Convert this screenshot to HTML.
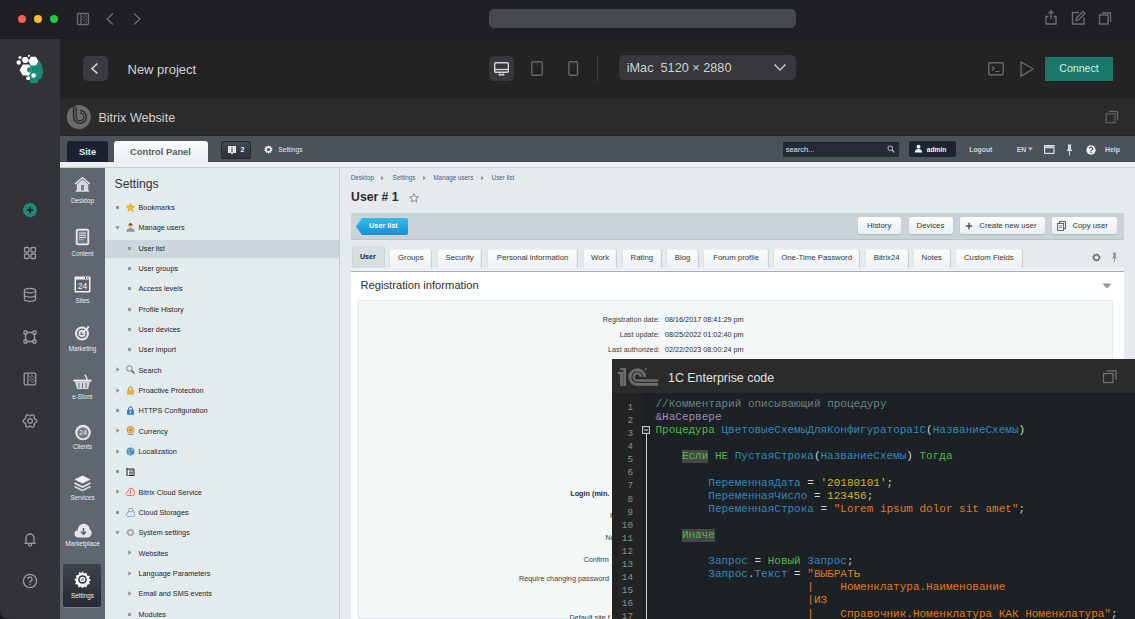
<!DOCTYPE html><html><head><meta charset="utf-8"><style>
html,body{margin:0;padding:0;width:1135px;height:619px;overflow:hidden;background:#1f2023;position:relative}
body{font-family:"Liberation Sans",sans-serif}
</style></head><body>
<div style="position:absolute;left:0px;top:0px;width:1135px;height:39px;background:#1f2023"></div>
<div style="position:absolute;left:17.75px;top:14.5px;width:8.5px;height:8.5px;border-radius:50%;background:#fe5f57"></div>
<div style="position:absolute;left:33.75px;top:14.5px;width:8.5px;height:8.5px;border-radius:50%;background:#febc2e"></div>
<div style="position:absolute;left:49.75px;top:14.5px;width:8.5px;height:8.5px;border-radius:50%;background:#28c840"></div>
<svg style="position:absolute;left:76px;top:12px;" width="14" height="14" viewBox="0 0 14 14"><rect x="1.5" y="1.5" width="11" height="11" rx="1" fill="none" stroke="#6c6c6f" stroke-width="1.3"/><path d="M5 1.8v10.4" stroke="#6c6c6f" stroke-width="1.2"/><path d="M6.5 4l5 5M6.5 7l4 4M8 2.5l4 4" stroke="#6c6c6f" stroke-width=".9"/></svg>
<svg style="position:absolute;left:104px;top:12px;" width="12" height="14" viewBox="0 0 12 14"><path d="M9 1.5L3 7l6 5.5" fill="none" stroke="#6c6c6f" stroke-width="1.3"/></svg>
<svg style="position:absolute;left:131px;top:12px;" width="12" height="14" viewBox="0 0 12 14"><path d="M3 1.5L9 7l-6 5.5" fill="none" stroke="#6c6c6f" stroke-width="1.3"/></svg>
<div style="position:absolute;left:489px;top:9px;width:307px;height:19px;background:#474a4d;border-radius:5px"></div>
<svg style="position:absolute;left:1044px;top:9.3px;" width="14" height="16" viewBox="0 0 14 16"><path d="M4.5 7.5H2v7.5h10V7.5H9.5M7 10V2M4.5 4.5L7 2l2.5 2.5" fill="none" stroke="#6c6c6f" stroke-width="1.4"/></svg>
<svg style="position:absolute;left:1071px;top:10.3px;" width="15" height="15" viewBox="0 0 15 15"><path d="M8 2.5H1.5v11.5h11.5V7.5" fill="none" stroke="#6c6c6f" stroke-width="1.4"/><path d="M5 10.5l0.8-2.8L12 1.5l2 2-6.2 6.2z" fill="none" stroke="#6c6c6f" stroke-width="1.3"/></svg>
<svg style="position:absolute;left:1098px;top:11.3px;" width="14" height="14" viewBox="0 0 14 14"><rect x="1.5" y="4" width="8.5" height="9" fill="none" stroke="#6c6c6f" stroke-width="1.4"/><path d="M4 2h8.5v9" fill="none" stroke="#6c6c6f" stroke-width="1.3"/></svg>
<div style="position:absolute;left:0px;top:39px;width:60px;height:580px;background:#323337"></div>
<svg style="position:absolute;left:10px;top:48px;" width="40" height="40" viewBox="0 0 40 40"><path d="M26.5 11.8C29.5 12.5 31.6 15 32.2 18.3c.3 1.6.2 2.8.9 4.4l.4 1.6-1.2.9.5 1.3-.9.6.6 1.4-.9 1.1c-.4.8-.8 1.3-1.9 1.5l-1.4.2-.3 3.8H20.4L19.6 31 18 25 18.5 17z" fill="#1a8a77"/>
<polygon points="28.4,13.2 25.9,17.6 20.9,17.6 18.4,13.2 20.9,8.8 25.9,8.8" fill="#fff"/>
<polygon points="18.8,12 17,15.1 13.5,15.1 11.7,12 13.5,8.9 17,8.9" fill="#fff"/>
<polygon points="22,22 18.9,27.6 12.7,27.6 9.6,22 12.7,16.4 18.9,16.4" fill="#fff"/>
<rect x="17.2" y="19.3" width="4.6" height="5.2" rx="2" fill="#1a8a77"/>
<circle cx="8.7" cy="14.5" r="2.2" fill="#fff"/><circle cx="10" cy="9.4" r="1.5" fill="#fff"/><circle cx="18.9" cy="7.8" r="1.1" fill="#fff"/>
<circle cx="23.6" cy="27.5" r="2.3" fill="#fff"/><circle cx="18.1" cy="30.3" r="2" fill="#fff"/></svg>
<div style="position:absolute;left:23px;top:203px;width:14px;height:14px;border-radius:50%;background:#1d8a78"></div>
<svg style="position:absolute;left:23px;top:203px;" width="14" height="14" viewBox="0 0 14 14"><path d="M7 3.8v6.4M3.8 7h6.4" stroke="#1a1a1a" stroke-width="1.4"/></svg>
<svg style="position:absolute;left:23px;top:246px;" width="14" height="14" viewBox="0 0 14 14"><g fill="none" stroke="#9c9c9e" stroke-width="1.3"><rect x="1.5" y="1.5" width="4.5" height="4.5" rx="1"/><rect x="8" y="1.5" width="4.5" height="4.5" rx="1"/><rect x="1.5" y="8" width="4.5" height="4.5" rx="1"/><rect x="8" y="8" width="4.5" height="4.5" rx="1"/></g></svg>
<svg style="position:absolute;left:23px;top:287px;" width="14" height="16" viewBox="0 0 14 16"><g fill="none" stroke="#9c9c9e" stroke-width="1.3"><ellipse cx="7" cy="3.6" rx="5.6" ry="2.3"/><path d="M1.4 3.6v8.4c0 1.3 2.5 2.3 5.6 2.3s5.6-1 5.6-2.3V3.6M1.4 7.8c0 1.3 2.5 2.3 5.6 2.3s5.6-1 5.6-2.3"/></g></svg>
<svg style="position:absolute;left:23px;top:330px;" width="14" height="14" viewBox="0 0 14 14"><g fill="none" stroke="#9c9c9e" stroke-width="1.3"><rect x="1" y="1" width="3" height="3" rx=".6"/><rect x="10" y="1" width="3" height="3" rx=".6"/><rect x="1" y="10" width="3" height="3" rx=".6"/><rect x="10" y="10" width="3" height="3" rx=".6"/><path d="M4 2.5h6M4 11.5h6M2.5 4v6M11.5 4v6"/></g></svg>
<svg style="position:absolute;left:23px;top:372px;" width="14" height="14" viewBox="0 0 14 14"><rect x="1.2" y="1.2" width="11.6" height="11.6" rx="1.2" fill="none" stroke="#9c9c9e" stroke-width="1.3"/><path d="M5 1.5v11" stroke="#9c9c9e" stroke-width="1.2"/><path d="M6.5 4l5 5M6.5 7l4 4M8 2.5l4 4" stroke="#9c9c9e" stroke-width=".9"/></svg>
<svg style="position:absolute;left:22px;top:413px;" width="16" height="16" viewBox="0 0 16 16"><g fill="none" stroke="#9c9c9e" stroke-width="1.3"><path d="M14.85 8.00 L14.71 8.59 L14.33 9.12 L13.80 9.55 L13.24 9.91 L12.77 10.22 L12.46 10.57 L12.31 11.02 L12.27 11.58 L12.24 12.24 L12.13 12.92 L11.86 13.52 L11.43 13.93 L10.85 14.10 L10.20 14.04 L9.55 13.80 L8.97 13.49 L8.46 13.24 L8.00 13.15 L7.54 13.24 L7.03 13.49 L6.45 13.80 L5.80 14.04 L5.15 14.10 L4.58 13.93 L4.14 13.52 L3.87 12.92 L3.76 12.24 L3.73 11.58 L3.69 11.02 L3.54 10.58 L3.23 10.22 L2.76 9.91 L2.20 9.55 L1.67 9.12 L1.29 8.59 L1.15 8.00 L1.29 7.41 L1.67 6.88 L2.20 6.45 L2.76 6.09 L3.23 5.78 L3.54 5.42 L3.69 4.98 L3.73 4.42 L3.76 3.76 L3.87 3.08 L4.14 2.48 L4.57 2.07 L5.15 1.90 L5.80 1.96 L6.45 2.20 L7.03 2.51 L7.54 2.76 L8.00 2.85 L8.46 2.76 L8.97 2.51 L9.55 2.20 L10.20 1.96 L10.85 1.90 L11.42 2.07 L11.86 2.48 L12.13 3.08 L12.24 3.76 L12.27 4.42 L12.31 4.98 L12.46 5.43 L12.77 5.78 L13.24 6.09 L13.80 6.45 L14.33 6.88 L14.71 7.41 L14.85 8.00Z"/><circle cx="8" cy="8" r="2.3"/></g></svg>
<svg style="position:absolute;left:23px;top:531px;" width="14" height="16" viewBox="0 0 14 16"><g fill="none" stroke="#9c9c9e" stroke-width="1.3"><path d="M3 12V7a4 4 0 0 1 8 0v5M1.5 12.3h11M5.5 13v.5a1.5 1.5 0 0 0 3 0V13"/></g></svg>
<svg style="position:absolute;left:22px;top:573px;" width="16" height="16" viewBox="0 0 16 16"><g fill="none" stroke="#9c9c9e" stroke-width="1.3"><circle cx="8" cy="8" r="6.6"/><path d="M5.9 6.3a2.1 2.1 0 1 1 3 1.9c-.6.3-.9.8-.9 1.4v.6"/></g><circle cx="8" cy="11.8" r=".8" fill="#9c9c9e"/></svg>
<div style="position:absolute;left:0;top:610px;width:9px;height:9px;background:radial-gradient(circle at 9px 0, rgba(0,0,0,0) 8.3px, #1c1d20 9.5px)"></div>
<div style="position:absolute;left:60px;top:39px;width:1075px;height:60px;background:#232323"></div>
<div style="position:absolute;left:83px;top:56px;width:25px;height:25px;background:#3a3b3f;border-radius:5px"></div>
<svg style="position:absolute;left:83px;top:56px;" width="25" height="25" viewBox="0 0 25 25"><path d="M14.5 7.5L9 12.5l5.5 5" fill="none" stroke="#d8d8d8" stroke-width="1.6"/></svg>
<div style="position:absolute;left:127.5px;top:62.60px;font:400 13px/13px 'Liberation Sans', sans-serif;color:#d4d4d4;white-space:pre;">New project</div>
<div style="position:absolute;left:489px;top:56px;width:25px;height:25px;background:#37383c;border-radius:5px"></div>
<svg style="position:absolute;left:489px;top:56px;" width="25" height="25" viewBox="0 0 25 25"><g fill="none" stroke="#d6d6d6" stroke-width="1.4"><rect x="5.7" y="6.7" width="13.6" height="9.6" rx="1"/><path d="M5.7 13.5h13.6"/></g><path d="M11 16.5h3v2h-3zM9.5 18.8h6" stroke="#d6d6d6" stroke-width="1.2"/></svg>
<svg style="position:absolute;left:530px;top:60px;" width="14" height="17" viewBox="0 0 14 17"><rect x="1.8" y="1.8" width="10.4" height="13.4" rx="1.2" fill="none" stroke="#686868" stroke-width="1.4"/><circle cx="7" cy="4" r=".6" fill="#686868"/></svg>
<svg style="position:absolute;left:567px;top:60px;" width="13" height="17" viewBox="0 0 13 17"><rect x="1.9" y="1.8" width="8.6" height="13.4" rx="1.2" fill="none" stroke="#686868" stroke-width="1.4"/><path d="M6.2 3.5v1.2" stroke="#686868" stroke-width=".8"/></svg>
<div style="position:absolute;left:597px;top:56px;width:1px;height:26px;background:#3a3a3a"></div>
<div style="position:absolute;left:619px;top:55px;width:177px;height:25px;background:#37383c;border-radius:5px"></div>
<div style="position:absolute;left:626.7px;top:61.95px;font:400 12.7px/12.7px 'Liberation Sans', sans-serif;color:#d2d2d2;white-space:pre;">iMac  5120 × 2880</div>
<svg style="position:absolute;left:772px;top:62px;" width="16" height="11" viewBox="0 0 16 11"><path d="M2.5 2.5l5.5 5.5 5.5-5.5" fill="none" stroke="#c4c4c4" stroke-width="1.5"/></svg>
<svg style="position:absolute;left:987px;top:61px;" width="18" height="16" viewBox="0 0 18 16"><rect x="1.8" y="1.8" width="14.4" height="12" rx="1" fill="none" stroke="#6a6a6a" stroke-width="1.4"/><path d="M4.8 5.5l2.5 2-2.5 2M8.5 10.5h4" fill="none" stroke="#6a6a6a" stroke-width="1.2"/></svg>
<svg style="position:absolute;left:1019px;top:60px;" width="16" height="18" viewBox="0 0 16 18"><path d="M2 1.8v14.4l12.2-7.2z" fill="none" stroke="#6a6a6a" stroke-width="1.4" stroke-linejoin="round"/></svg>
<div style="position:absolute;left:1045px;top:57px;width:68px;height:24px;background:#19786a"></div>
<div style="position:absolute;left:1059.3px;top:63.13px;font:400 10.6px/10.6px 'Liberation Sans', sans-serif;color:#d8ebe7;white-space:pre;">Connect</div>
<div style="position:absolute;left:60px;top:99px;width:1075px;height:36px;background:#2b2b2b"></div>
<svg style="position:absolute;left:62px;top:101px;" width="34" height="32" viewBox="0 0 34 32"><circle cx="16.8" cy="16.1" r="12" fill="#6c6c6c"/><path d="M11.6 4V16A6.4 6.4 0 1 0 18 9.6" fill="none" stroke="#2b2b2b" stroke-width="1.5"/><path d="M14.2 5.5V16A3.8 3.8 0 1 0 18 12.2" fill="none" stroke="#2b2b2b" stroke-width="1.3"/></svg>
<div style="position:absolute;left:98.4px;top:111.53px;font:400 12.6px/12.6px 'Liberation Sans', sans-serif;color:#d2d2d2;white-space:pre;">Bitrix Website</div>
<svg style="position:absolute;left:1105px;top:110px;" width="14" height="14" viewBox="0 0 14 14"><rect x="1.2" y="3.8" width="9" height="9" fill="none" stroke="#666" stroke-width="1.1"/><path d="M3.8 1.4h8.8v8.8" fill="none" stroke="#666" stroke-width="1.1"/></svg>
<div style="position:absolute;left:60px;top:135px;width:1075px;height:1px;background:#232323"></div>
<div style="position:absolute;left:60px;top:136px;width:1075px;height:26px;background:#4c525a"></div>
<div style="position:absolute;left:60px;top:160.6px;width:1075px;height:1.6px;background:#3f444b"></div>
<div style="position:absolute;left:60px;top:162.2px;width:1075px;height:5px;background:#ebf0f1"></div>
<div style="position:absolute;left:60px;top:167px;width:1075px;height:1px;background:#c6ced2"></div>
<div style="position:absolute;left:67px;top:141px;width:40.5px;height:20.5px;background:#1b2130;border-radius:2px 2px 0 0"></div>
<div style="position:absolute;left:79px;top:147.63px;font:700 9.3px/9.3px 'Liberation Sans', sans-serif;color:#e6ecf2;white-space:pre;">Site</div>
<div style="position:absolute;left:114px;top:140.5px;width:94px;height:22px;background:linear-gradient(#fbfcfc,#e9eef0);border-radius:3px 3px 0 0"></div>
<div style="position:absolute;left:130px;top:146.54px;font:700 9.4px/9.4px 'Liberation Sans', sans-serif;color:#575d63;white-space:pre;">Control Panel</div>
<div style="position:absolute;left:221px;top:140.5px;width:29.5px;height:18.5px;background:linear-gradient(#434956,#2c313b);border-radius:3px;box-shadow:inset 0 0 0 1px #262a32"></div>
<svg style="position:absolute;left:227px;top:145px;" width="10" height="11" viewBox="0 0 10 11"><path d="M1 1h8v7H6l-1 2-1-2H1z" fill="#e8ecef"/><rect x="4.4" y="2.2" width="1.2" height="1.2" fill="#3a404a"/><rect x="4.4" y="4" width="1.2" height="3.2" fill="#3a404a"/></svg>
<div style="position:absolute;left:240.5px;top:146.37px;font:700 7px/7px 'Liberation Sans', sans-serif;color:#eef2f6;white-space:pre;">2</div>
<svg style="position:absolute;left:264px;top:145px;" width="9" height="9" viewBox="0 0 9 9"><path d="M4.5 .3l.9 1.2 1.5-.4.2 1.5 1.4.7-.7 1.2.7 1.2-1.4.7-.2 1.5-1.5-.4-.9 1.2-.9-1.2-1.5.4-.2-1.5L.3 5.7 1 4.5.3 3.3l1.4-.7.2-1.5 1.5.4z" fill="#e4e8ec"/><circle cx="4.5" cy="4.5" r="1.6" fill="#4a5058"/></svg>
<div style="position:absolute;left:278.2px;top:146.69px;font:400 6.75px/6.75px 'Liberation Sans', sans-serif;color:#e4e9ee;white-space:pre;">Settings</div>
<div style="position:absolute;left:783px;top:142px;width:116px;height:15px;background:#252a36;border-radius:1px;box-shadow:inset 0 1px 0 #1b1f28"></div>
<div style="position:absolute;left:785.7px;top:146.25px;font:400 7.5px/7.5px 'Liberation Sans', sans-serif;color:#dfe6ee;white-space:pre;">search...</div>
<svg style="position:absolute;left:887px;top:145px;" width="8" height="8" viewBox="0 0 8 8"><circle cx="3.3" cy="3.3" r="2.3" fill="none" stroke="#b9c0c8" stroke-width="1"/><path d="M5 5l2.2 2.3" stroke="#b9c0c8" stroke-width="1.2"/></svg>
<div style="position:absolute;left:909.3px;top:141.4px;width:46.5px;height:16px;background:#1d2330;border-radius:2px"></div>
<svg style="position:absolute;left:914px;top:144px;" width="9" height="9" viewBox="0 0 9 9"><circle cx="4.5" cy="2.7" r="2" fill="#eef1f4"/><path d="M.8 8.5c0-2.4 1.6-3.5 3.7-3.5s3.7 1.1 3.7 3.5z" fill="#eef1f4"/></svg>
<div style="position:absolute;left:926.7px;top:147.13px;font:700 6.7px/6.7px 'Liberation Sans', sans-serif;color:#eef3f8;white-space:pre;">admin</div>
<div style="position:absolute;left:969.3px;top:147.24px;font:700 6.8px/6.8px 'Liberation Sans', sans-serif;color:#cfd6dd;white-space:pre;">Logout</div>
<div style="position:absolute;left:1016.8px;top:147.24px;font:700 6.8px/6.8px 'Liberation Sans', sans-serif;color:#cfd6dd;white-space:pre;">EN</div>
<svg style="position:absolute;left:1028px;top:147px;" width="5" height="4" viewBox="0 0 5 4"><path d="M0 .5h5L2.5 3.5z" fill="#b9c1c8"/></svg>
<svg style="position:absolute;left:1044px;top:145px;" width="11" height="9" viewBox="0 0 11 9"><rect x=".6" y=".6" width="9.4" height="7.8" fill="none" stroke="#d6dce2" stroke-width="1.2"/><rect x="1.2" y="1.2" width="8.2" height="2" fill="#d6dce2"/></svg>
<svg style="position:absolute;left:1066px;top:144px;" width="7" height="12" viewBox="0 0 7 12"><path d="M1.5 .5h4L5 2v3l1.5 2h-6L2 5V2z" fill="#d6dce2"/><path d="M3.5 7v4.5" stroke="#d6dce2" stroke-width="1"/></svg>
<svg style="position:absolute;left:1086px;top:145px;" width="10" height="10" viewBox="0 0 10 10"><circle cx="5" cy="5" r="4.7" fill="#eef1f4"/><path d="M3.4 3.8a1.6 1.6 0 1 1 2.2 1.4c-.4.2-.6.5-.6.9v.4" fill="none" stroke="#4a5058" stroke-width="1.1"/><rect x="4.4" y="7.1" width="1.2" height="1.1" fill="#4a5058"/></svg>
<div style="position:absolute;left:1104.9px;top:146.47px;font:700 7px/7px 'Liberation Sans', sans-serif;color:#cfd6dd;white-space:pre;">Help</div>
<div style="position:absolute;left:60px;top:168px;width:45px;height:451px;background:#60666f"></div>
<div style="position:absolute;left:63.2px;top:564.2px;width:37.5px;height:43.2px;background:linear-gradient(#3d434d,#262b33);border-radius:2px;box-shadow:0 1px 0 #7b818a"></div>
<div style="position:absolute;left:82.5px;top:198.07px;font:400 6.3px/6.3px 'Liberation Sans', sans-serif;color:#e8eef4;white-space:pre;transform:translateX(-50%)">Desktop</div>
<div style="position:absolute;left:82.5px;top:251.27px;font:400 6.3px/6.3px 'Liberation Sans', sans-serif;color:#e8eef4;white-space:pre;transform:translateX(-50%)">Content</div>
<div style="position:absolute;left:82.5px;top:297.57px;font:400 6.3px/6.3px 'Liberation Sans', sans-serif;color:#e8eef4;white-space:pre;transform:translateX(-50%)">Sites</div>
<div style="position:absolute;left:82.5px;top:346.27px;font:400 6.3px/6.3px 'Liberation Sans', sans-serif;color:#e8eef4;white-space:pre;transform:translateX(-50%)">Marketing</div>
<div style="position:absolute;left:82.5px;top:394.47px;font:400 6.3px/6.3px 'Liberation Sans', sans-serif;color:#e8eef4;white-space:pre;transform:translateX(-50%)">e-Store</div>
<div style="position:absolute;left:82.5px;top:444.17px;font:400 6.3px/6.3px 'Liberation Sans', sans-serif;color:#e8eef4;white-space:pre;transform:translateX(-50%)">Clients</div>
<div style="position:absolute;left:82.5px;top:495.07px;font:400 6.3px/6.3px 'Liberation Sans', sans-serif;color:#e8eef4;white-space:pre;transform:translateX(-50%)">Services</div>
<div style="position:absolute;left:82.5px;top:540.97px;font:400 6.3px/6.3px 'Liberation Sans', sans-serif;color:#e8eef4;white-space:pre;transform:translateX(-50%)">Marketplace</div>
<div style="position:absolute;left:82.5px;top:593.27px;font:400 6.3px/6.3px 'Liberation Sans', sans-serif;color:#e8eef4;white-space:pre;transform:translateX(-50%)">Settings</div>
<svg style="position:absolute;left:74px;top:176px;" width="17" height="16" viewBox="0 0 17 16"><defs><linearGradient id="ig" x1="0" y1="0" x2="0" y2="1"><stop offset="0" stop-color="#f4f5f6"/><stop offset="1" stop-color="#b9bdc2"/></linearGradient></defs><path d="M8.5 .8L.6 7.5l1 .9L8.5 2.6l6.9 5.8 1-.9z" fill="#eceeef"/><path d="M2.8 8.2L8.5 3.6l5.7 4.6v6.8H2.8z" fill="#d6d9dc"/><rect x="7" y="9" width="3" height="6" fill="#7c8188"/><rect x="1.8" y="14.5" width="13.4" height="1.2" fill="#eceeef"/></svg>
<svg style="position:absolute;left:75px;top:228px;" width="15" height="18" viewBox="0 0 15 18"><rect x=".8" y=".8" width="13.4" height="16.4" rx="2" fill="#e4e7e9"/><rect x="2.6" y="2.6" width="9.8" height="12.8" fill="#70767e"/><path d="M4 5h7M4 7.2h7M4 9.4h7" stroke="#e8ebed" stroke-width="1"/><path d="M4 11.6h4.5" stroke="#a8adb2" stroke-width="1.4"/></svg>
<svg style="position:absolute;left:74px;top:276px;" width="17" height="17" viewBox="0 0 17 17"><rect x=".5" y=".5" width="16" height="16" rx="1" fill="#eef0f1"/><rect x="2" y="3.5" width="13" height="11.5" fill="#5d636b"/><rect x="11" y="1" width="1" height="2" fill="#5d636b"/><rect x="13.5" y="1" width="1" height="2" fill="#5d636b"/><text x="8.5" y="13" font-family="Liberation Sans" font-size="8.5" fill="#f2f4f5" text-anchor="middle">24</text></svg>
<svg style="position:absolute;left:74px;top:325px;" width="16" height="16" viewBox="0 0 16 16"><circle cx="8" cy="8.5" r="7" fill="#e6e8ea"/><circle cx="8" cy="8.5" r="5" fill="#6a7078"/><circle cx="8" cy="8.5" r="3.4" fill="#e6e8ea"/><circle cx="8" cy="8.5" r="1.7" fill="#6a7078"/><path d="M8 8.5L14 2.5" stroke="#f4f5f6" stroke-width="1.3"/><path d="M12.5 1.5l2 2 1-2.2z" fill="#f4f5f6"/></svg>
<svg style="position:absolute;left:73px;top:374px;" width="19" height="16" viewBox="0 0 19 16"><path d="M12 .8l2.5 5" stroke="#eceeef" stroke-width="1.4"/><path d="M.5 5.6h18v2H.5z" fill="#eceeef"/><path d="M2 7.6h15l-2 7.5H4z" fill="#d6d9dc"/><path d="M6 9v5M9.5 9v5M13 9v5" stroke="#6a7078" stroke-width="1"/></svg>
<svg style="position:absolute;left:73.5px;top:424px;" width="18" height="17" viewBox="0 0 18 17"><circle cx="9" cy="8.5" r="7.8" fill="#e6e8ea"/><circle cx="9" cy="8.8" r="5.6" fill="#747a82"/><text x="9" y="11.4" font-family="Liberation Sans" font-size="7" fill="#eef0f2" text-anchor="middle">24</text></svg>
<svg style="position:absolute;left:73.5px;top:474.5px;" width="17" height="17" viewBox="0 0 17 17"><path d="M8.5 .5L16.5 4.5 8.5 8.5.5 4.5z" fill="#eff1f2"/><path d="M.5 8L8.5 12 16.5 8" fill="none" stroke="#e2e5e8" stroke-width="1.6"/><path d="M.5 11.5L8.5 15.5 16.5 11.5" fill="none" stroke="#d2d6da" stroke-width="1.6"/></svg>
<svg style="position:absolute;left:73.5px;top:523px;" width="18" height="15" viewBox="0 0 18 15"><path d="M4.5 14.5C2 14.5.5 12.8.5 10.7.5 8.8 2 7.3 3.8 7.1 4 3.5 6.5.7 9.8.7c3.3 0 5.8 2.6 6 5.7 1.2.6 1.8 2 1.8 3.6 0 2.5-1.8 4.5-4.3 4.5z" fill="#e4e7e9"/><path d="M9.5 5v6M7 8.8l2.5 2.6 2.5-2.6" fill="none" stroke="#5d636b" stroke-width="1.6"/></svg>
<svg style="position:absolute;left:73.5px;top:571px;" width="17" height="17" viewBox="0 0 17 17"><path d="M8.5 .3l1.4 2.3 2.6-.8.6 2.7 2.7.6-.8 2.6 2.3 1.4-2.3 1.4.8 2.6-2.7.6-.6 2.7-2.6-.8-1.4 2.3-1.4-2.3-2.6.8-.6-2.7-2.7-.6.8-2.6L.3 8.5 2.6 7.1l-.8-2.6 2.7-.6.6-2.7 2.6.8z" fill="#f5f6f7"/><circle cx="8.5" cy="8.5" r="4.3" fill="#2f343c"/><circle cx="8.5" cy="8.5" r="2.8" fill="#f5f6f7"/><circle cx="8.5" cy="8.5" r="1.4" fill="#8e949b"/></svg>
<div style="position:absolute;left:105px;top:168px;width:234px;height:451px;background:#e4ebed"></div>
<div style="position:absolute;left:339px;top:168px;width:1px;height:451px;background:#c4cfd4"></div>
<div style="position:absolute;left:114.5px;top:177.67px;font:400 12.2px/12.2px 'Liberation Sans', sans-serif;color:#2e3133;white-space:pre;">Settings</div>
<div style="position:absolute;left:105px;top:240.4px;width:234px;height:18.1px;background:#cdd6da"></div>
<div style="position:absolute;left:115.9px;top:205.9px;width:3.2px;height:3.2px;background:#8d979c"></div>
<svg style="position:absolute;left:125.5px;top:202.8px;" width="9" height="9" viewBox="0 0 9 9"><path d="M4.5 .3l1.3 2.8 3 .3-2.3 2 .7 3L4.5 6.8 1.8 8.4l.7-3-2.3-2 3-.3z" fill="#f5c518" stroke="#c9931a" stroke-width=".5"/></svg>
<div style="position:absolute;left:138.5px;top:204.04px;font:400 7.28px/7.28px 'Liberation Sans', sans-serif;color:#1f2326;white-space:pre;">Bookmarks</div>
<svg style="position:absolute;left:115.0px;top:225.82999999999998px;" width="5" height="4" viewBox="0 0 5 4"><path d="M.2 .3h4.6L2.5 3.7z" fill="#8a9499"/></svg>
<svg style="position:absolute;left:125.5px;top:223.13px;" width="9" height="9" viewBox="0 0 9 9"><circle cx="4.5" cy="2.6" r="2.1" fill="#e8b878"/><path d="M.3 8.8c0-2.6 1.8-3.8 4.2-3.8s4.2 1.2 4.2 3.8z" fill="#8d9399"/><path d="M2.4 2.2c.3-1.5 1.2-2 2.1-2s1.9.5 2.1 2z" fill="#6b4a2a"/></svg>
<div style="position:absolute;left:138.5px;top:224.37px;font:400 7.28px/7.28px 'Liberation Sans', sans-serif;color:#1f2326;white-space:pre;">Manage users</div>
<div style="position:absolute;left:127.9px;top:246.56px;width:3.2px;height:3.2px;background:#8d979c"></div>
<div style="position:absolute;left:138.5px;top:244.70px;font:400 7.28px/7.28px 'Liberation Sans', sans-serif;color:#1f2326;white-space:pre;">User list</div>
<div style="position:absolute;left:127.9px;top:266.89000000000004px;width:3.2px;height:3.2px;background:#8d979c"></div>
<div style="position:absolute;left:138.5px;top:265.03px;font:400 7.28px/7.28px 'Liberation Sans', sans-serif;color:#1f2326;white-space:pre;">User groups</div>
<div style="position:absolute;left:127.9px;top:287.22px;width:3.2px;height:3.2px;background:#8d979c"></div>
<div style="position:absolute;left:138.5px;top:285.36px;font:400 7.28px/7.28px 'Liberation Sans', sans-serif;color:#1f2326;white-space:pre;">Access levels</div>
<div style="position:absolute;left:127.9px;top:307.55px;width:3.2px;height:3.2px;background:#8d979c"></div>
<div style="position:absolute;left:138.5px;top:305.69px;font:400 7.28px/7.28px 'Liberation Sans', sans-serif;color:#1f2326;white-space:pre;">Profile History</div>
<div style="position:absolute;left:127.9px;top:327.88px;width:3.2px;height:3.2px;background:#8d979c"></div>
<div style="position:absolute;left:138.5px;top:326.02px;font:400 7.28px/7.28px 'Liberation Sans', sans-serif;color:#1f2326;white-space:pre;">User devices</div>
<div style="position:absolute;left:127.9px;top:348.21000000000004px;width:3.2px;height:3.2px;background:#8d979c"></div>
<div style="position:absolute;left:138.5px;top:346.35px;font:400 7.28px/7.28px 'Liberation Sans', sans-serif;color:#1f2326;white-space:pre;">User import</div>
<svg style="position:absolute;left:115.5px;top:367.44px;" width="4" height="5" viewBox="0 0 4 5"><path d="M.3 .3L3.7 2.5.3 4.7z" fill="#8a9499"/></svg>
<svg style="position:absolute;left:125.5px;top:365.44px;" width="9" height="9" viewBox="0 0 9 9"><circle cx="3.5" cy="3.5" r="2.8" fill="#dfeaf2" stroke="#6b7c88" stroke-width=".9"/><path d="M5.5 5.5l3 3" stroke="#50606b" stroke-width="1.4"/></svg>
<div style="position:absolute;left:138.5px;top:366.68px;font:400 7.28px/7.28px 'Liberation Sans', sans-serif;color:#1f2326;white-space:pre;">Search</div>
<svg style="position:absolute;left:115.5px;top:387.77px;" width="4" height="5" viewBox="0 0 4 5"><path d="M.3 .3L3.7 2.5.3 4.7z" fill="#8a9499"/></svg>
<svg style="position:absolute;left:125.5px;top:385.77px;" width="9" height="9" viewBox="0 0 9 9"><rect x="1" y="3.8" width="7" height="5" rx=".8" fill="#e8b33a"/><path d="M2.6 3.8V2.8a1.9 1.9 0 0 1 3.8 0v1" fill="none" stroke="#b0862a" stroke-width="1"/></svg>
<div style="position:absolute;left:138.5px;top:387.01px;font:400 7.28px/7.28px 'Liberation Sans', sans-serif;color:#1f2326;white-space:pre;">Proactive Protection</div>
<div style="position:absolute;left:115.9px;top:409.20000000000005px;width:3.2px;height:3.2px;background:#8d979c"></div>
<svg style="position:absolute;left:125.5px;top:406.1px;" width="9" height="9" viewBox="0 0 9 9"><rect x="1" y="3.8" width="7" height="5" rx=".8" fill="#2d7fd0"/><path d="M2.6 3.8V2.8a1.9 1.9 0 0 1 3.8 0v1" fill="none" stroke="#2d5f9a" stroke-width="1"/><rect x="3.8" y="5" width="1.4" height="2.4" fill="#d8e8f6"/></svg>
<div style="position:absolute;left:138.5px;top:407.34px;font:400 7.28px/7.28px 'Liberation Sans', sans-serif;color:#1f2326;white-space:pre;">HTTPS Configuration</div>
<svg style="position:absolute;left:115.5px;top:428.43px;" width="4" height="5" viewBox="0 0 4 5"><path d="M.3 .3L3.7 2.5.3 4.7z" fill="#8a9499"/></svg>
<svg style="position:absolute;left:125.5px;top:426.43px;" width="9" height="9" viewBox="0 0 9 9"><circle cx="4.5" cy="3.8" r="3.5" fill="#e6c46a" stroke="#a8843a" stroke-width=".7"/><circle cx="4.5" cy="3.8" r="1.6" fill="#c0923a"/><path d="M1.5 8.5h6" stroke="#8d9399" stroke-width="1"/></svg>
<div style="position:absolute;left:138.5px;top:427.67px;font:400 7.28px/7.28px 'Liberation Sans', sans-serif;color:#1f2326;white-space:pre;">Currency</div>
<svg style="position:absolute;left:115.5px;top:448.76px;" width="4" height="5" viewBox="0 0 4 5"><path d="M.3 .3L3.7 2.5.3 4.7z" fill="#8a9499"/></svg>
<svg style="position:absolute;left:125.5px;top:446.76px;" width="9" height="9" viewBox="0 0 9 9"><circle cx="4.5" cy="4.5" r="4" fill="#4c8ed8"/><path d="M2 2.5c1 .5 1.5 1.5 1 3s1 2 2 2.5M6 1.2c-.5 1 0 2 1.2 2.2" fill="none" stroke="#8cc870" stroke-width="1.2"/></svg>
<div style="position:absolute;left:138.5px;top:448.00px;font:400 7.28px/7.28px 'Liberation Sans', sans-serif;color:#1f2326;white-space:pre;">Localization</div>
<div style="position:absolute;left:115.9px;top:470.19px;width:3.2px;height:3.2px;background:#8d979c"></div>
<svg style="position:absolute;left:125.5px;top:467.09px;" width="9" height="9" viewBox="0 0 9 9"><path d="M1 .8v8.4M1 2h7v6.5H2.5" fill="none" stroke="#222" stroke-width="1"/><path d="M3 3.8h4M3 5.4h4M3 7h4" stroke="#222" stroke-width=".7"/></svg>
<svg style="position:absolute;left:115.5px;top:489.42px;" width="4" height="5" viewBox="0 0 4 5"><path d="M.3 .3L3.7 2.5.3 4.7z" fill="#8a9499"/></svg>
<svg style="position:absolute;left:125.5px;top:487.42px;" width="9" height="9" viewBox="0 0 9 9"><path d="M2.2 8.6C1 8.6.3 7.8.3 6.8s.7-1.7 1.6-1.8C2 3 3.3 1.2 5 1.2s2.9 1.3 3 3c.6.3.9 1 .9 1.8 0 1.4-1 2.6-2.4 2.6z" fill="#fbe4dc" stroke="#e0452a" stroke-width=".8"/><path d="M4.7 3.2v3.5" stroke="#e0452a" stroke-width="1"/></svg>
<div style="position:absolute;left:138.5px;top:488.66px;font:400 7.28px/7.28px 'Liberation Sans', sans-serif;color:#1f2326;white-space:pre;">Bitrix Cloud Service</div>
<div style="position:absolute;left:115.9px;top:510.85px;width:3.2px;height:3.2px;background:#8d979c"></div>
<svg style="position:absolute;left:125.5px;top:507.75px;" width="9" height="9" viewBox="0 0 9 9"><path d="M2.2 8.8C1 8.8.3 8 .3 7s.7-1.7 1.6-1.8C2 3.2 3.3 1.4 5 1.4s2.9 1.3 3 3c.6.3.9 1 .9 1.8 0 1.4-1 2.6-2.4 2.6z" fill="#dcecfb" stroke="#4a90d8" stroke-width=".8"/><rect x="3" y=".3" width="3.5" height="3" fill="#eef3f8" stroke="#6f8090" stroke-width=".6"/></svg>
<div style="position:absolute;left:138.5px;top:508.99px;font:400 7.28px/7.28px 'Liberation Sans', sans-serif;color:#1f2326;white-space:pre;">Cloud Storages</div>
<svg style="position:absolute;left:115.0px;top:530.78px;" width="5" height="4" viewBox="0 0 5 4"><path d="M.2 .3h4.6L2.5 3.7z" fill="#8a9499"/></svg>
<svg style="position:absolute;left:125.5px;top:528.0799999999999px;" width="9" height="9" viewBox="0 0 9 9"><path d="M4.5 .3l.9 1.2 1.5-.4.2 1.5 1.4.7-.7 1.2.7 1.2-1.4.7-.2 1.5-1.5-.4-.9 1.2-.9-1.2-1.5.4-.2-1.5L.3 5.7 1 4.5.3 3.3l1.4-.7.2-1.5 1.5.4z" fill="#a4abb1"/><circle cx="4.5" cy="4.5" r="1.7" fill="#e3eaec"/></svg>
<div style="position:absolute;left:138.5px;top:529.32px;font:400 7.28px/7.28px 'Liberation Sans', sans-serif;color:#1f2326;white-space:pre;">System settings</div>
<svg style="position:absolute;left:127.5px;top:550.41px;" width="4" height="5" viewBox="0 0 4 5"><path d="M.3 .3L3.7 2.5.3 4.7z" fill="#8a9499"/></svg>
<div style="position:absolute;left:138.5px;top:549.65px;font:400 7.28px/7.28px 'Liberation Sans', sans-serif;color:#1f2326;white-space:pre;">Websites</div>
<svg style="position:absolute;left:127.5px;top:570.74px;" width="4" height="5" viewBox="0 0 4 5"><path d="M.3 .3L3.7 2.5.3 4.7z" fill="#8a9499"/></svg>
<div style="position:absolute;left:138.5px;top:569.98px;font:400 7.28px/7.28px 'Liberation Sans', sans-serif;color:#1f2326;white-space:pre;">Language Parameters</div>
<svg style="position:absolute;left:127.5px;top:591.0699999999999px;" width="4" height="5" viewBox="0 0 4 5"><path d="M.3 .3L3.7 2.5.3 4.7z" fill="#8a9499"/></svg>
<div style="position:absolute;left:138.5px;top:590.31px;font:400 7.28px/7.28px 'Liberation Sans', sans-serif;color:#1f2326;white-space:pre;">Email and SMS events</div>
<div style="position:absolute;left:127.9px;top:612.5px;width:3.2px;height:3.2px;background:#8d979c"></div>
<div style="position:absolute;left:138.5px;top:610.64px;font:400 7.28px/7.28px 'Liberation Sans', sans-serif;color:#1f2326;white-space:pre;">Modules</div>
<div style="position:absolute;left:340px;top:168px;width:795px;height:451px;background:#e5ebed"></div>
<div style="position:absolute;left:350.8px;top:174.97px;font:400 6.3px/6.3px 'Liberation Sans', sans-serif;color:#4a5884;white-space:pre;">Desktop</div>
<div style="position:absolute;left:392.6px;top:174.97px;font:400 6.3px/6.3px 'Liberation Sans', sans-serif;color:#4a5884;white-space:pre;">Settings</div>
<div style="position:absolute;left:433.4px;top:174.97px;font:400 6.3px/6.3px 'Liberation Sans', sans-serif;color:#4a5884;white-space:pre;">Manage users</div>
<div style="position:absolute;left:491.6px;top:174.97px;font:400 6.3px/6.3px 'Liberation Sans', sans-serif;color:#4a5884;white-space:pre;">User list</div>
<svg style="position:absolute;left:381.4px;top:176px;" width="3" height="4" viewBox="0 0 3 4"><path d="M0 0L3 2 0 4z" fill="#8d979c"/></svg>
<svg style="position:absolute;left:422.8px;top:176px;" width="3" height="4" viewBox="0 0 3 4"><path d="M0 0L3 2 0 4z" fill="#8d979c"/></svg>
<svg style="position:absolute;left:480.9px;top:176px;" width="3" height="4" viewBox="0 0 3 4"><path d="M0 0L3 2 0 4z" fill="#8d979c"/></svg>
<div style="position:absolute;left:351.1px;top:190.77px;font:700 12.2px/12.2px 'Liberation Sans', sans-serif;color:#2a2c2e;white-space:pre;">User # 1</div>
<svg style="position:absolute;left:409px;top:192.5px;" width="10" height="10" viewBox="0 0 10 10"><path d="M5 .6l1.3 2.9 3.1.3-2.4 2.1.7 3.1L5 7.4 2.3 9l.7-3.1L.6 3.8l3.1-.3z" fill="none" stroke="#6f787d" stroke-width=".8"/></svg>
<div style="position:absolute;left:351px;top:213px;width:773px;height:26.5px;background:#cad3d7;border-radius:2px;box-shadow:inset 0 -1px 0 #b9c3c8"></div>
<svg style="position:absolute;left:356px;top:218px;" width="52" height="17" viewBox="0 0 52 17"><defs><linearGradient id="bl" x1="0" y1="0" x2="0" y2="1"><stop offset="0" stop-color="#33bde8"/><stop offset="1" stop-color="#1a8fd2"/></linearGradient></defs><path d="M6 0H50a2 2 0 0 1 2 2V15a2 2 0 0 1-2 2H6L0 8.5z" fill="url(#bl)"/></svg>
<div style="position:absolute;left:369.1px;top:222.45px;font:700 7.27px/7.27px 'Liberation Sans', sans-serif;color:#ffffff;white-space:pre;">User list</div>
<div style="position:absolute;left:858.3px;top:217.4px;width:42.5px;height:16.4px;background:linear-gradient(#fbfcfc,#e9eef0);border-radius:2px;box-shadow:0 0 0 .5px #c3ccd0,0 1px 1px rgba(0,0,0,.18)"></div>
<div style="position:absolute;left:867.1px;top:221.90px;font:400 7.8px/7.8px 'Liberation Sans', sans-serif;color:#33383c;white-space:pre;">History</div>
<div style="position:absolute;left:908.8px;top:217.4px;width:44.200000000000045px;height:16.4px;background:linear-gradient(#fbfcfc,#e9eef0);border-radius:2px;box-shadow:0 0 0 .5px #c3ccd0,0 1px 1px rgba(0,0,0,.18)"></div>
<div style="position:absolute;left:916.6px;top:221.90px;font:400 7.8px/7.8px 'Liberation Sans', sans-serif;color:#33383c;white-space:pre;">Devices</div>
<div style="position:absolute;left:960.3px;top:217.4px;width:84.29999999999995px;height:16.4px;background:linear-gradient(#fbfcfc,#e9eef0);border-radius:2px;box-shadow:0 0 0 .5px #c3ccd0,0 1px 1px rgba(0,0,0,.18)"></div>
<svg style="position:absolute;left:965px;top:221.5px;" width="8" height="8" viewBox="0 0 8 8"><path d="M4 .8v6.4M.8 4h6.4" stroke="#4a5055" stroke-width="1.4"/></svg>
<div style="position:absolute;left:979.3px;top:221.90px;font:400 7.8px/7.8px 'Liberation Sans', sans-serif;color:#33383c;white-space:pre;">Create new user</div>
<div style="position:absolute;left:1051.9px;top:217.4px;width:64.69999999999982px;height:16.4px;background:linear-gradient(#fbfcfc,#e9eef0);border-radius:2px;box-shadow:0 0 0 .5px #c3ccd0,0 1px 1px rgba(0,0,0,.18)"></div>
<svg style="position:absolute;left:1057px;top:220.5px;" width="9" height="10" viewBox="0 0 9 10"><rect x="2.5" y=".6" width="6" height="7" fill="none" stroke="#4a5055" stroke-width=".9"/><rect x=".6" y="2.4" width="6" height="7" fill="#f2f4f5" stroke="#4a5055" stroke-width=".9"/><path d="M2 5h3M2 6.6h3" stroke="#4a5055" stroke-width=".6"/></svg>
<div style="position:absolute;left:1072.4px;top:221.90px;font:400 7.8px/7.8px 'Liberation Sans', sans-serif;color:#33383c;white-space:pre;">Copy user</div>
<div style="position:absolute;left:351.5px;top:246.3px;width:33.69999999999999px;height:21.5px;background:linear-gradient(#d9e0e3,#d5dde0);border-radius:2px 2px 0 0;box-shadow:inset 1px 0 0 #cdd5d9,inset -1px 0 0 #cdd5d9"></div>
<div style="position:absolute;left:360px;top:254.49px;font:700 7.1px/7.1px 'Liberation Sans', sans-serif;color:#1f2224;white-space:pre;">User</div>
<div style="position:absolute;left:389.3px;top:248.8px;width:43.0px;height:19px;background:linear-gradient(#fbfcfc,#eef2f3);border-radius:2px 2px 0 0;box-shadow:inset 0 .6px 0 #dfe5e8,inset .8px 0 0 #d9e0e3,inset -1.2px 0 0 #c9d1d5"></div>
<div style="position:absolute;left:389.3px;width:43.0px;top:253.80px;text-align:center;font:400 7.8px/7.8px 'Liberation Sans', sans-serif;color:#34393d;white-space:pre">Groups</div>
<div style="position:absolute;left:436.9px;top:248.8px;width:45.5px;height:19px;background:linear-gradient(#fbfcfc,#eef2f3);border-radius:2px 2px 0 0;box-shadow:inset 0 .6px 0 #dfe5e8,inset .8px 0 0 #d9e0e3,inset -1.2px 0 0 #c9d1d5"></div>
<div style="position:absolute;left:436.9px;width:45.5px;top:253.80px;text-align:center;font:400 7.8px/7.8px 'Liberation Sans', sans-serif;color:#34393d;white-space:pre">Security</div>
<div style="position:absolute;left:487px;top:248.8px;width:91.20000000000005px;height:19px;background:linear-gradient(#fbfcfc,#eef2f3);border-radius:2px 2px 0 0;box-shadow:inset 0 .6px 0 #dfe5e8,inset .8px 0 0 #d9e0e3,inset -1.2px 0 0 #c9d1d5"></div>
<div style="position:absolute;left:487px;width:91.20000000000005px;top:253.80px;text-align:center;font:400 7.8px/7.8px 'Liberation Sans', sans-serif;color:#34393d;white-space:pre">Personal information</div>
<div style="position:absolute;left:582.8px;top:248.8px;width:34.60000000000002px;height:19px;background:linear-gradient(#fbfcfc,#eef2f3);border-radius:2px 2px 0 0;box-shadow:inset 0 .6px 0 #dfe5e8,inset .8px 0 0 #d9e0e3,inset -1.2px 0 0 #c9d1d5"></div>
<div style="position:absolute;left:582.8px;width:34.60000000000002px;top:253.80px;text-align:center;font:400 7.8px/7.8px 'Liberation Sans', sans-serif;color:#34393d;white-space:pre">Work</div>
<div style="position:absolute;left:621.9px;top:248.8px;width:39.89999999999998px;height:19px;background:linear-gradient(#fbfcfc,#eef2f3);border-radius:2px 2px 0 0;box-shadow:inset 0 .6px 0 #dfe5e8,inset .8px 0 0 #d9e0e3,inset -1.2px 0 0 #c9d1d5"></div>
<div style="position:absolute;left:621.9px;width:39.89999999999998px;top:253.80px;text-align:center;font:400 7.8px/7.8px 'Liberation Sans', sans-serif;color:#34393d;white-space:pre">Rating</div>
<div style="position:absolute;left:666px;top:248.8px;width:33.10000000000002px;height:19px;background:linear-gradient(#fbfcfc,#eef2f3);border-radius:2px 2px 0 0;box-shadow:inset 0 .6px 0 #dfe5e8,inset .8px 0 0 #d9e0e3,inset -1.2px 0 0 #c9d1d5"></div>
<div style="position:absolute;left:666px;width:33.10000000000002px;top:253.80px;text-align:center;font:400 7.8px/7.8px 'Liberation Sans', sans-serif;color:#34393d;white-space:pre">Blog</div>
<div style="position:absolute;left:703.3px;top:248.8px;width:65.60000000000002px;height:19px;background:linear-gradient(#fbfcfc,#eef2f3);border-radius:2px 2px 0 0;box-shadow:inset 0 .6px 0 #dfe5e8,inset .8px 0 0 #d9e0e3,inset -1.2px 0 0 #c9d1d5"></div>
<div style="position:absolute;left:703.3px;width:65.60000000000002px;top:253.80px;text-align:center;font:400 7.8px/7.8px 'Liberation Sans', sans-serif;color:#34393d;white-space:pre">Forum profile</div>
<div style="position:absolute;left:773.1px;top:248.8px;width:87.0px;height:19px;background:linear-gradient(#fbfcfc,#eef2f3);border-radius:2px 2px 0 0;box-shadow:inset 0 .6px 0 #dfe5e8,inset .8px 0 0 #d9e0e3,inset -1.2px 0 0 #c9d1d5"></div>
<div style="position:absolute;left:773.1px;width:87.0px;top:253.80px;text-align:center;font:400 7.8px/7.8px 'Liberation Sans', sans-serif;color:#34393d;white-space:pre">One-Time Password</div>
<div style="position:absolute;left:864.6px;top:248.8px;width:44.19999999999993px;height:19px;background:linear-gradient(#fbfcfc,#eef2f3);border-radius:2px 2px 0 0;box-shadow:inset 0 .6px 0 #dfe5e8,inset .8px 0 0 #d9e0e3,inset -1.2px 0 0 #c9d1d5"></div>
<div style="position:absolute;left:864.6px;width:44.19999999999993px;top:253.80px;text-align:center;font:400 7.8px/7.8px 'Liberation Sans', sans-serif;color:#34393d;white-space:pre">Bitrix24</div>
<div style="position:absolute;left:913px;top:248.8px;width:37.60000000000002px;height:19px;background:linear-gradient(#fbfcfc,#eef2f3);border-radius:2px 2px 0 0;box-shadow:inset 0 .6px 0 #dfe5e8,inset .8px 0 0 #d9e0e3,inset -1.2px 0 0 #c9d1d5"></div>
<div style="position:absolute;left:913px;width:37.60000000000002px;top:253.80px;text-align:center;font:400 7.8px/7.8px 'Liberation Sans', sans-serif;color:#34393d;white-space:pre">Notes</div>
<div style="position:absolute;left:955.1px;top:248.8px;width:67.5px;height:19px;background:linear-gradient(#fbfcfc,#eef2f3);border-radius:2px 2px 0 0;box-shadow:inset 0 .6px 0 #dfe5e8,inset .8px 0 0 #d9e0e3,inset -1.2px 0 0 #c9d1d5"></div>
<div style="position:absolute;left:955.1px;width:67.5px;top:253.80px;text-align:center;font:400 7.8px/7.8px 'Liberation Sans', sans-serif;color:#34393d;white-space:pre">Custom Fields</div>
<svg style="position:absolute;left:1091.5px;top:252.5px;" width="9" height="9" viewBox="0 0 9 9"><path d="M4.5 .3l.9 1.2 1.5-.4.2 1.5 1.4.7-.7 1.2.7 1.2-1.4.7-.2 1.5-1.5-.4-.9 1.2-.9-1.2-1.5.4-.2-1.5L.3 5.7 1 4.5.3 3.3l1.4-.7.2-1.5 1.5.4z" fill="#646c71"/><circle cx="4.5" cy="4.5" r="2.1" fill="#e5ebed"/></svg>
<svg style="position:absolute;left:1111px;top:251.5px;" width="7" height="11" viewBox="0 0 7 11"><path d="M1.8 .8h3.4L4.8 2.2v2.6l1.3 1.8H.9l1.3-1.8V2.2z" fill="#8a9398"/><path d="M3.5 6.6v3.6" stroke="#8a9398" stroke-width=".9"/></svg>
<div style="position:absolute;left:351px;top:267.8px;width:773px;height:3px;background:#edf1f2"></div>
<div style="position:absolute;left:351px;top:270.8px;width:773px;height:1.2px;background:#a8b2b6"></div>
<div style="position:absolute;left:351px;top:272px;width:773px;height:347px;background:#ffffff"></div>
<div style="position:absolute;left:360.5px;top:280.32px;font:400 11.2px/11.2px 'Liberation Sans', sans-serif;color:#2b2e30;white-space:pre;">Registration information</div>
<svg style="position:absolute;left:1102px;top:283px;" width="10" height="6" viewBox="0 0 10 6"><path d="M.5 .5h9L5 5.5z" fill="#8c969b"/></svg>
<div style="position:absolute;left:358px;top:300px;width:755px;height:319px;background:#f3f7f8;box-shadow:inset 0 0 0 1px #e3e9eb"></div>
<div style="position:absolute;right:475.29999999999995px;top:315.64px;font:400 7.28px/7.28px 'Liberation Sans', sans-serif;color:#3b3f44;white-space:pre;">Registration date:</div>
<div style="position:absolute;left:664.9px;top:315.64px;font:400 7.28px/7.28px 'Liberation Sans', sans-serif;color:#2a2d30;white-space:pre;">08/16/2017 08:41:29 pm</div>
<div style="position:absolute;right:475.29999999999995px;top:330.64px;font:400 7.28px/7.28px 'Liberation Sans', sans-serif;color:#3b3f44;white-space:pre;">Last update:</div>
<div style="position:absolute;left:664.9px;top:330.64px;font:400 7.28px/7.28px 'Liberation Sans', sans-serif;color:#2a2d30;white-space:pre;">08/25/2022 01:02:40 pm</div>
<div style="position:absolute;right:475.29999999999995px;top:345.54px;font:400 7.28px/7.28px 'Liberation Sans', sans-serif;color:#3b3f44;white-space:pre;">Last authorized:</div>
<div style="position:absolute;left:664.9px;top:345.54px;font:400 7.28px/7.28px 'Liberation Sans', sans-serif;color:#2a2d30;white-space:pre;">02/22/2023 08:00:24 pm</div>
<div style="position:absolute;left:570.2px;top:489.84px;font:700 7.28px/7.28px 'Liberation Sans', sans-serif;color:#2a2d30;white-space:pre;">Login (min.</div>
<div style="position:absolute;left:609.9px;top:511.54px;font:400 7.28px/7.28px 'Liberation Sans', sans-serif;color:#3b3f44;white-space:pre;">P</div>
<div style="position:absolute;left:605.6px;top:534.34px;font:400 7.28px/7.28px 'Liberation Sans', sans-serif;color:#3b3f44;white-space:pre;">Ne</div>
<div style="position:absolute;left:583.4px;top:555.54px;font:400 7.28px/7.28px 'Liberation Sans', sans-serif;color:#3b3f44;white-space:pre;">Confirm</div>
<div style="position:absolute;left:519px;top:574.84px;font:400 7.28px/7.28px 'Liberation Sans', sans-serif;color:#3b3f44;white-space:pre;">Require changing password</div>
<div style="position:absolute;left:569.5px;top:613.84px;font:400 7.28px/7.28px 'Liberation Sans', sans-serif;color:#3b3f44;white-space:pre;">Default site f</div>
<div style="position:absolute;left:612px;top:359px;width:523px;height:34px;background:#2b2b2b"></div>
<div style="position:absolute;left:612px;top:393px;width:30px;height:226px;background:#232323"></div>
<div style="position:absolute;left:642px;top:393px;width:493px;height:226px;background:#1b2124"></div>
<svg style="position:absolute;left:614px;top:362px;" width="50" height="30" viewBox="0 0 50 30"><g fill="#6d6d6d"><rect x="9.3" y="6.1" width="2.8" height="17.9"/><rect x="6.1" y="6.1" width="6" height="2"/><rect x="6.1" y="9.9" width="2.8" height="14.1"/><rect x="3.9" y="9.9" width="3" height="2.2"/><circle cx="31.7" cy="7.3" r="1"/></g>
<g fill="none" stroke="#6d6d6d"><path d="M30.6 15.03A7.35 7.35 0 1 0 23.25 22.38H44" stroke-width="2.9"/><path d="M26.8 14.9A3.6 3.6 0 1 0 23.2 18.5H44" stroke-width="2.3"/></g></svg>
<div style="position:absolute;left:668px;top:371.50px;font:400 12.4px/12.4px 'Liberation Sans', sans-serif;color:#e2e2e2;white-space:pre;">1C Enterprise code</div>
<svg style="position:absolute;left:1102px;top:369px;" width="16" height="15" viewBox="0 0 16 15"><rect x="1.5" y="4.5" width="9.5" height="9" fill="none" stroke="#707070" stroke-width="1.3"/><path d="M4.5 1.8h9.5v9" fill="none" stroke="#707070" stroke-width="1.3"/></svg>
<div style="position:absolute;right:502px;top:402.87px;font:400 9.3px/9.3px 'Liberation Mono', monospace;color:#8e8e8e;white-space:pre;">1</div>
<div style="position:absolute;left:655.5px;top:398.97px;font:400 11px/11px 'Liberation Mono', monospace;color:#6a8188;white-space:pre;">//Комментарий описывающий процедуру</div>
<div style="position:absolute;right:502px;top:415.97px;font:400 9.3px/9.3px 'Liberation Mono', monospace;color:#8e8e8e;white-space:pre;">2</div>
<div style="position:absolute;left:655.5px;top:412.07px;font:400 11px/11px 'Liberation Mono', monospace;color:#a088bc;white-space:pre;">&НаСервере</div>
<div style="position:absolute;right:502px;top:429.07px;font:400 9.3px/9.3px 'Liberation Mono', monospace;color:#8e8e8e;white-space:pre;">3</div>
<div style="position:absolute;left:655.5px;top:425.17px;font:400 11px/11px 'Liberation Mono', monospace;color:#55b646;white-space:pre;">Процедура</div>
<div style="position:absolute;left:721.5px;top:425.17px;font:400 11px/11px 'Liberation Mono', monospace;color:#3786ba;white-space:pre;">ЦветовыеСхемыДляКонфигуратора1С</div>
<div style="position:absolute;left:926.0999999999999px;top:425.17px;font:400 11px/11px 'Liberation Mono', monospace;color:#d4d4d4;white-space:pre;">(</div>
<div style="position:absolute;left:932.7px;top:425.17px;font:400 11px/11px 'Liberation Mono', monospace;color:#3786ba;white-space:pre;">НазваниеСхемы</div>
<div style="position:absolute;left:1018.5px;top:425.17px;font:400 11px/11px 'Liberation Mono', monospace;color:#d4d4d4;white-space:pre;">)</div>
<div style="position:absolute;right:502px;top:442.17px;font:400 9.3px/9.3px 'Liberation Mono', monospace;color:#8e8e8e;white-space:pre;">4</div>
<div style="position:absolute;right:502px;top:455.27px;font:400 9.3px/9.3px 'Liberation Mono', monospace;color:#8e8e8e;white-space:pre;">5</div>
<div style="position:absolute;left:681.9px;top:450.4px;width:26.4px;height:13px;background:#454747"></div>
<div style="position:absolute;left:681.9px;top:451.37px;font:400 11px/11px 'Liberation Mono', monospace;color:#55b646;white-space:pre;">Если</div>
<div style="position:absolute;left:714.9px;top:451.37px;font:400 11px/11px 'Liberation Mono', monospace;color:#55b646;white-space:pre;">НЕ</div>
<div style="position:absolute;left:734.7px;top:451.37px;font:400 11px/11px 'Liberation Mono', monospace;color:#3786ba;white-space:pre;">ПустаяСтрока</div>
<div style="position:absolute;left:813.9px;top:451.37px;font:400 11px/11px 'Liberation Mono', monospace;color:#d4d4d4;white-space:pre;">(</div>
<div style="position:absolute;left:820.5px;top:451.37px;font:400 11px/11px 'Liberation Mono', monospace;color:#3786ba;white-space:pre;">НазваниеСхемы</div>
<div style="position:absolute;left:906.3px;top:451.37px;font:400 11px/11px 'Liberation Mono', monospace;color:#d4d4d4;white-space:pre;">)</div>
<div style="position:absolute;left:919.5px;top:451.37px;font:400 11px/11px 'Liberation Mono', monospace;color:#55b646;white-space:pre;">Тогда</div>
<div style="position:absolute;right:502px;top:468.37px;font:400 9.3px/9.3px 'Liberation Mono', monospace;color:#8e8e8e;white-space:pre;">6</div>
<div style="position:absolute;right:502px;top:481.47px;font:400 9.3px/9.3px 'Liberation Mono', monospace;color:#8e8e8e;white-space:pre;">7</div>
<div style="position:absolute;left:708.3px;top:477.57px;font:400 11px/11px 'Liberation Mono', monospace;color:#3786ba;white-space:pre;">ПеременнаяДата</div>
<div style="position:absolute;left:807.3px;top:477.57px;font:400 11px/11px 'Liberation Mono', monospace;color:#d4d4d4;white-space:pre;">=</div>
<div style="position:absolute;left:820.5px;top:477.57px;font:400 11px/11px 'Liberation Mono', monospace;color:#d6b21c;white-space:pre;">'20180101'</div>
<div style="position:absolute;left:886.5px;top:477.57px;font:400 11px/11px 'Liberation Mono', monospace;color:#c4ccd2;white-space:pre;">;</div>
<div style="position:absolute;right:502px;top:494.57px;font:400 9.3px/9.3px 'Liberation Mono', monospace;color:#8e8e8e;white-space:pre;">8</div>
<div style="position:absolute;left:708.3px;top:490.67px;font:400 11px/11px 'Liberation Mono', monospace;color:#3786ba;white-space:pre;">ПеременнаяЧисло</div>
<div style="position:absolute;left:813.9px;top:490.67px;font:400 11px/11px 'Liberation Mono', monospace;color:#d4d4d4;white-space:pre;">=</div>
<div style="position:absolute;left:827.1px;top:490.67px;font:400 11px/11px 'Liberation Mono', monospace;color:#d6b21c;white-space:pre;">123456</div>
<div style="position:absolute;left:866.7px;top:490.67px;font:400 11px/11px 'Liberation Mono', monospace;color:#c4ccd2;white-space:pre;">;</div>
<div style="position:absolute;right:502px;top:507.67px;font:400 9.3px/9.3px 'Liberation Mono', monospace;color:#8e8e8e;white-space:pre;">9</div>
<div style="position:absolute;left:708.3px;top:503.77px;font:400 11px/11px 'Liberation Mono', monospace;color:#3786ba;white-space:pre;">ПеременнаяСтрока</div>
<div style="position:absolute;left:820.5px;top:503.77px;font:400 11px/11px 'Liberation Mono', monospace;color:#d4d4d4;white-space:pre;">=</div>
<div style="position:absolute;left:833.7px;top:503.77px;font:400 11px/11px 'Liberation Mono', monospace;color:#e27a1b;white-space:pre;">"Lorem ipsum dolor sit amet"</div>
<div style="position:absolute;left:1018.5px;top:503.77px;font:400 11px/11px 'Liberation Mono', monospace;color:#c4ccd2;white-space:pre;">;</div>
<div style="position:absolute;right:502px;top:520.77px;font:400 9.3px/9.3px 'Liberation Mono', monospace;color:#8e8e8e;white-space:pre;">10</div>
<div style="position:absolute;right:502px;top:533.87px;font:400 9.3px/9.3px 'Liberation Mono', monospace;color:#8e8e8e;white-space:pre;">11</div>
<div style="position:absolute;left:681.9px;top:529.0px;width:33.0px;height:13px;background:#454747"></div>
<div style="position:absolute;left:681.9px;top:529.97px;font:400 11px/11px 'Liberation Mono', monospace;color:#55b646;white-space:pre;">Иначе</div>
<div style="position:absolute;right:502px;top:546.97px;font:400 9.3px/9.3px 'Liberation Mono', monospace;color:#8e8e8e;white-space:pre;">12</div>
<div style="position:absolute;right:502px;top:560.07px;font:400 9.3px/9.3px 'Liberation Mono', monospace;color:#8e8e8e;white-space:pre;">13</div>
<div style="position:absolute;left:708.3px;top:556.17px;font:400 11px/11px 'Liberation Mono', monospace;color:#3786ba;white-space:pre;">Запрос</div>
<div style="position:absolute;left:754.5px;top:556.17px;font:400 11px/11px 'Liberation Mono', monospace;color:#d4d4d4;white-space:pre;">=</div>
<div style="position:absolute;left:767.7px;top:556.17px;font:400 11px/11px 'Liberation Mono', monospace;color:#55b646;white-space:pre;">Новый</div>
<div style="position:absolute;left:807.3px;top:556.17px;font:400 11px/11px 'Liberation Mono', monospace;color:#3786ba;white-space:pre;">Запрос</div>
<div style="position:absolute;left:846.9px;top:556.17px;font:400 11px/11px 'Liberation Mono', monospace;color:#c4ccd2;white-space:pre;">;</div>
<div style="position:absolute;right:502px;top:573.17px;font:400 9.3px/9.3px 'Liberation Mono', monospace;color:#8e8e8e;white-space:pre;">14</div>
<div style="position:absolute;left:708.3px;top:569.27px;font:400 11px/11px 'Liberation Mono', monospace;color:#3786ba;white-space:pre;">Запрос</div>
<div style="position:absolute;left:747.9px;top:569.27px;font:400 11px/11px 'Liberation Mono', monospace;color:#c4ccd2;white-space:pre;">.</div>
<div style="position:absolute;left:754.5px;top:569.27px;font:400 11px/11px 'Liberation Mono', monospace;color:#3786ba;white-space:pre;">Текст</div>
<div style="position:absolute;left:794.1px;top:569.27px;font:400 11px/11px 'Liberation Mono', monospace;color:#d4d4d4;white-space:pre;">=</div>
<div style="position:absolute;left:807.3px;top:569.27px;font:400 11px/11px 'Liberation Mono', monospace;color:#e27a1b;white-space:pre;">"ВЫБРАТЬ</div>
<div style="position:absolute;right:502px;top:586.27px;font:400 9.3px/9.3px 'Liberation Mono', monospace;color:#8e8e8e;white-space:pre;">15</div>
<div style="position:absolute;left:807.3px;top:582.37px;font:400 11px/11px 'Liberation Mono', monospace;color:#e27a1b;white-space:pre;">|    Номенклатура.Наименование</div>
<div style="position:absolute;right:502px;top:599.37px;font:400 9.3px/9.3px 'Liberation Mono', monospace;color:#8e8e8e;white-space:pre;">16</div>
<div style="position:absolute;left:807.3px;top:595.47px;font:400 11px/11px 'Liberation Mono', monospace;color:#e27a1b;white-space:pre;">|ИЗ</div>
<div style="position:absolute;right:502px;top:612.47px;font:400 9.3px/9.3px 'Liberation Mono', monospace;color:#8e8e8e;white-space:pre;">17</div>
<div style="position:absolute;left:807.3px;top:608.57px;font:400 11px/11px 'Liberation Mono', monospace;color:#e27a1b;white-space:pre;">|    Справочник.Номенклатура КАК Номенклатура"</div>
<div style="position:absolute;left:1110.9px;top:608.57px;font:400 11px/11px 'Liberation Mono', monospace;color:#c4ccd2;white-space:pre;">;</div>
<svg style="position:absolute;left:642px;top:426px;" width="8" height="8" viewBox="0 0 8 8"><rect x=".6" y=".6" width="6.8" height="6.8" fill="#1b2124" stroke="#cfcfcf" stroke-width="1.1"/><path d="M2 4h4" stroke="#cfcfcf" stroke-width="1.1"/></svg>
<div style="position:absolute;left:645.7px;top:434px;width:1.1px;height:185px;background:#cfcfcf"></div>
</body></html>
